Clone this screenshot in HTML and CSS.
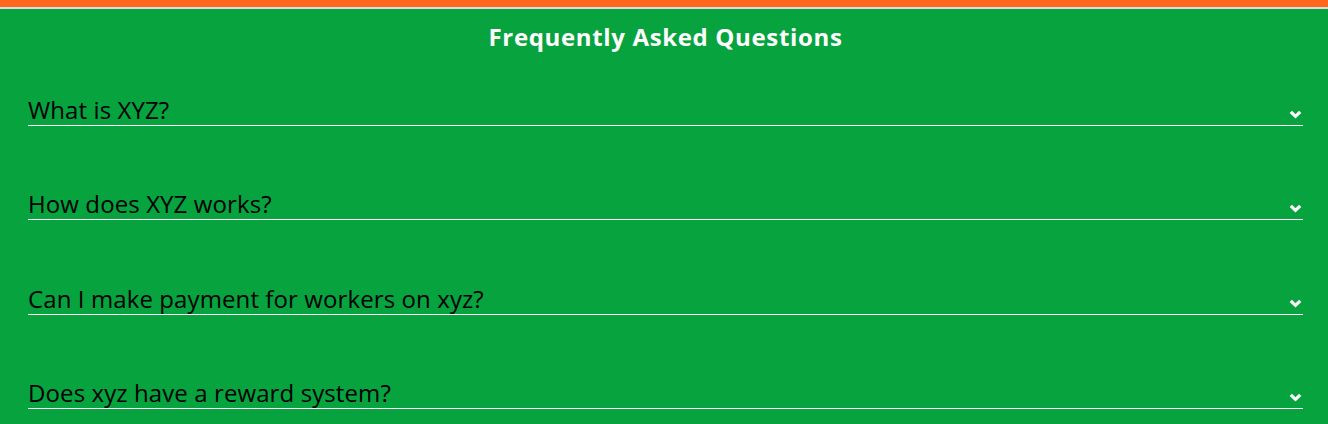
FILE: index.html
```html
<!DOCTYPE html>
<html lang="en">
<head>
<meta charset="utf-8">
<title>FAQ</title>
<link rel="stylesheet" href="styles.css">
</head>
<body>
<div class="topbar"></div>
<section class="faq">
  <h2 class="faq-title">Frequently Asked Questions</h2>
  <div class="faq-list">
    <div class="faq-item">
      <span class="faq-q">What is XYZ?</span>
      <svg class="chev" width="13" height="9" viewBox="0 0 13 9"><polyline points="1.8,1.8 6.5,6.3 11.2,1.8" fill="none" stroke="#fff" stroke-width="3.2"/></svg>
    </div>
    <div class="faq-item">
      <span class="faq-q">How does XYZ works?</span>
      <svg class="chev" width="13" height="9" viewBox="0 0 13 9"><polyline points="1.8,1.8 6.5,6.3 11.2,1.8" fill="none" stroke="#fff" stroke-width="3.2"/></svg>
    </div>
    <div class="faq-item">
      <span class="faq-q">Can I make payment for workers on xyz?</span>
      <svg class="chev" width="13" height="9" viewBox="0 0 13 9"><polyline points="1.8,1.8 6.5,6.3 11.2,1.8" fill="none" stroke="#fff" stroke-width="3.2"/></svg>
    </div>
    <div class="faq-item">
      <span class="faq-q">Does xyz have a reward system?</span>
      <svg class="chev" width="13" height="9" viewBox="0 0 13 9"><polyline points="1.8,1.8 6.5,6.3 11.2,1.8" fill="none" stroke="#fff" stroke-width="3.2"/></svg>
    </div>
  </div>
</section>
</body>
</html>
```
FILE: styles.css
```css
html, body {
  margin: 0;
  padding: 0;
  background: #07a33e;
  font-family: "Open Sans", "Noto Sans", sans-serif;
}
.topbar {
  height: 7px;
  background: #ff671f;
  border-bottom: 2px solid #dcdcdc;
}
.faq {
  padding: 13px 25px 0 28px;
}
.faq-title {
  margin: 0;
  text-align: center;
  color: #fff;
  font-size: 24px;
  font-weight: 700;
  line-height: 30px;
  letter-spacing: 0.65px;
}
.faq-list {
  display: flex;
  flex-direction: column;
  gap: 63.4px;
  margin-top: 43px;
}
.faq-item {
  display: flex;
  justify-content: space-between;
  align-items: flex-end;
  border-bottom: 1px solid #fff;
  height: 30px;
}
.faq-q {
  color: #000;
  font-size: 24px;
  line-height: 30px;
  letter-spacing: 0.1px;
}
.chev {
  margin-bottom: 6px;
  margin-right: 1px;
}
```
